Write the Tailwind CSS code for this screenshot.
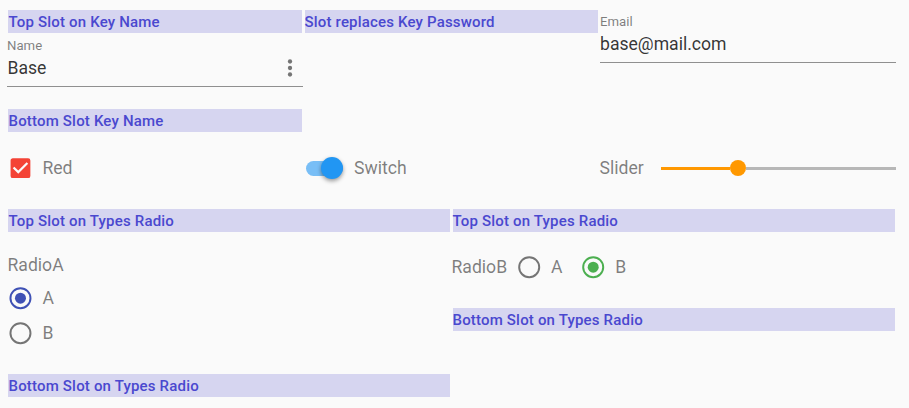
<!DOCTYPE html>
<html lang="en">
<head>
<meta charset="utf-8">
<title>Form slots</title>
<script src="https://cdn.jsdelivr.net/npm/@tailwindcss/browser@4"></script>
</head>
<body class="h-[408px] overflow-hidden bg-[#fafafa] pt-[10px] pr-[13px] pl-[7px] font-['Roboto',sans-serif] text-[17.6px] leading-[22px] font-normal text-black/50">
  <div class="grid h-[122px] grid-cols-[296.5px_296px_296px] items-start">
    <div>
      <div class="ml-px h-[23px] w-[294px] bg-[#d6d5f0] pl-[0.5px] text-[15px] leading-[24px] font-medium tracking-[0.18px] text-[#4a48cf]">Top Slot on Key Name</div>
      <div class="flex h-[54px] w-[296px] items-end justify-between border-b border-[#8f8f8f]">
        <div class="pb-[7px]">
          <div class="text-[13.2px] leading-[22px]">Name</div>
          <div class="pl-[0.5px] text-black/80">Base</div>
        </div>
        <svg class="mb-[5px] h-[26px] w-[26px]" viewBox="0 0 24 24" fill="#757575"><circle cx="12" cy="6" r="2"/><circle cx="12" cy="12" r="2"/><circle cx="12" cy="18" r="2"/></svg>
      </div>
      <div class="mt-[22px] ml-px h-[23px] w-[294px] bg-[#d6d5f0] pl-[0.5px] text-[15px] leading-[24px] font-medium tracking-[0.18px] text-[#4a48cf]">Bottom Slot Key Name</div>
    </div>
    <div class="ml-[1.5px] h-[23px] w-[293px] bg-[#d6d5f0] text-[15px] leading-[24px] font-medium tracking-[0.18px] text-[#4a48cf]"><span class="-ml-[0.5px]">Slot replaces Key Password</span></div>
    <div class="ml-[0.5px] h-[53px] w-[296px] border-b border-[#8f8f8f]">
      <div class="text-[13.2px] leading-[23px]">Email</div>
      <div class="text-black/80">base@mail.com</div>
    </div>
  </div>

  <div class="grid h-[77px] grid-cols-[296.5px_296px_296px] items-center pb-[5px]">
    <div class="flex items-center">
      <svg class="h-[26.4px] w-[26.4px]" viewBox="-0.25 0 24 24"><path fill="#f44336" d="M10 17l-5-5 1.41-1.42L10 14.17l7.59-7.59L19 8m0-5H5c-1.11 0-2 .89-2 2v14a2 2 0 0 0 2 2h14a2 2 0 0 0 2-2V5a2 2 0 0 0-2-2z"/></svg>
      <span class="ml-[9px]">Red</span>
    </div>
    <div class="flex items-center">
      <div class="ml-[2.5px] flex h-[15px] w-[36.5px] items-center justify-end rounded-full bg-[#2196f3]/60">
        <div class="h-[22px] w-[22px] shrink-0 rounded-full bg-[#2196f3] shadow-[0_2px_4px_rgba(0,0,0,0.4)]"></div>
      </div>
      <span class="ml-[11.5px]">Switch</span>
    </div>
    <div class="flex items-center">
      <span class="w-[61.5px]">Slider</span>
      <div class="flex h-4 w-[235px] items-center">
        <div class="h-[3px] w-[69.5px] bg-[#ff9800]"></div>
        <div class="h-[15.4px] w-[15.4px] rounded-full bg-[#ff9800]"></div>
        <div class="h-[3px] flex-1 bg-[#b7b7b7]"></div>
      </div>
    </div>
  </div>

  <div class="grid grid-cols-[444.5px_444.5px] items-start">
    <div>
      <div class="ml-px h-[23px] w-[442px] bg-[#d6d5f0] pl-[0.5px] text-[15px] leading-[24px] font-medium tracking-[0.18px] text-[#4a48cf]">Top Slot on Types Radio</div>
      <div class="mt-[22px] pl-[0.5px]">RadioA</div>
      <div class="mt-[9px] flex h-[26px] items-center">
        <svg class="h-[26.4px] w-[26.4px]" viewBox="-0.25 0 24 24" fill="#3f51b5"><circle cx="12" cy="12" r="9.1" fill="none" stroke="#3f51b5" stroke-width="1.8"/><circle cx="12" cy="12" r="5"/></svg>
        <span class="ml-[9px]">A</span>
      </div>
      <div class="mt-[9px] flex h-[26px] items-center">
        <svg class="h-[26.4px] w-[26.4px]" viewBox="-0.25 0 24 24"><circle cx="12" cy="12" r="9.1" fill="none" stroke="#757575" stroke-width="1.8"/></svg>
        <span class="ml-[9px]">B</span>
      </div>
      <div class="mt-[28px] ml-px h-[23px] w-[442px] bg-[#d6d5f0] pl-[0.5px] text-[15px] leading-[24px] font-medium tracking-[0.18px] text-[#4a48cf]">Bottom Slot on Types Radio</div>
    </div>
    <div>
      <div class="ml-[1.5px] h-[23px] w-[442px] bg-[#d6d5f0] text-[15px] leading-[24px] font-medium tracking-[0.18px] text-[#4a48cf]"><span class="-ml-[0.5px]">Top Slot on Types Radio</span></div>
      <div class="mt-[22px] flex h-[26px] items-center">
        <span class="w-[64.5px]">RadioB</span>
        <svg class="h-[26.4px] w-[26.4px]" viewBox="0 0 24 24"><circle cx="12" cy="12" r="9.1" fill="none" stroke="#757575" stroke-width="1.8"/></svg>
        <span class="ml-[8.5px] w-[29px]">A</span>
        <svg class="h-[26.4px] w-[26.4px]" viewBox="0 0 24 24" fill="#4caf50"><circle cx="12" cy="12" r="9.1" fill="none" stroke="#4caf50" stroke-width="1.8"/><circle cx="12" cy="12" r="5"/></svg>
        <span class="ml-[9px]">B</span>
      </div>
      <div class="mt-[28px] ml-[1.5px] h-[23px] w-[442px] bg-[#d6d5f0] text-[15px] leading-[24px] font-medium tracking-[0.18px] text-[#4a48cf]"><span class="-ml-[0.5px]">Bottom Slot on Types Radio</span></div>
    </div>
  </div>
</body>
</html>
